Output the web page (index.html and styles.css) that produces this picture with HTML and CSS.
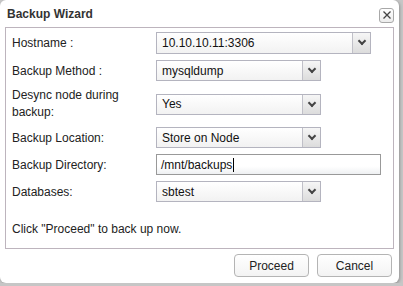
FILE: index.html
```html
<!DOCTYPE html>
<html lang="en">
<head>
    <meta charset="UTF-8">
    <title>Backup Wizard</title>
    <link rel="stylesheet" href="styles.css">
</head>
<body>
    <div class="dialog">
        <div class="title-bar">
            <span class="title">Backup Wizard</span>
            <button class="close" type="button" aria-label="Close">
                <svg width="10" height="10" viewBox="0 0 10 10"><path d="M1.5 1.5 L8.5 8.5 M8.5 1.5 L1.5 8.5" stroke="#444" stroke-width="1.3" fill="none"/></svg>
            </button>
        </div>
        <div class="panel">
            <div class="form-grid">
                <label class="lbl">Hostname :</label>
                <div class="select wide tall"><span>10.10.10.11:3306</span><i class="arrow"></i></div>

                <label class="lbl">Backup Method :</label>
                <div class="select"><span>mysqldump</span><i class="arrow"></i></div>

                <label class="lbl two-line">Desync node during<br>backup:</label>
                <div class="select"><span>Yes</span><i class="arrow"></i></div>

                <label class="lbl">Backup Location:</label>
                <div class="select"><span>Store on Node</span><i class="arrow"></i></div>

                <label class="lbl">Backup Directory:</label>
                <div class="text-input"><span>/mnt/backups</span><i class="caret"></i></div>

                <label class="lbl">Databases:</label>
                <div class="select"><span>sbtest</span><i class="arrow"></i></div>
            </div>
            <p class="hint">Click "Proceed" to back up now.</p>
        </div>
        <div class="buttons">
            <button type="button">Proceed</button>
            <button type="button">Cancel</button>
        </div>
    </div>
</body>
</html>
```

FILE: styles.css
```css
body {
    margin: 0;
    background: #c6c6c6;
    font-family: "Liberation Sans", Arial, sans-serif;
    font-size: 12px;
    color: #222;
}

.dialog {
    width: 399px;
    height: 283px;
    background: #fff;
    border-radius: 6px;
    box-shadow: 1px 1px 3px rgba(0, 0, 0, 0.25);
    box-sizing: border-box;
    padding: 0 5px;
}

.title-bar {
    height: 27px;
    display: flex;
    align-items: center;
    justify-content: space-between;
    padding: 0 0 0 2px;
}

.title {
    font-weight: bold;
    font-size: 12px;
    color: #333;
    margin-top: 1px;
}

.close {
    width: 15px;
    height: 15px;
    padding: 0;
    border: 1px solid #a8a8a8;
    border-radius: 3px;
    background: linear-gradient(#fff, #ececec);
    display: flex;
    align-items: center;
    justify-content: center;
    margin-top: 3px;
}

.panel {
    border: 1px solid #bdb4bd;
    height: 222px;
    box-sizing: border-box;
    padding: 4px 6px 0 6px;
}

.form-grid {
    display: grid;
    grid-template-columns: 144px 1fr;
    row-gap: 6px;
    align-items: center;
}

.lbl {
    color: #222;
}

.two-line {
    line-height: 17px;
}

.select {
    width: 165px;
    height: 21px;
    box-sizing: border-box;
    border: 1px solid #b4b4bf;
    background: linear-gradient(#fff, #f2f2f2);
    display: flex;
    align-items: center;
    color: #111;
}

.select.wide {
    width: 215px;
}

.select.tall {
    height: 22px;
}

.select span {
    flex: 1;
    padding-left: 5px;
}

.arrow {
    width: 17px;
    height: 100%;
    border-left: 1px solid #c0c0c8;
    background: linear-gradient(#f6f6f6, #dcdcdc);
    position: relative;
}

.arrow::after {
    content: "";
    position: absolute;
    left: 6px;
    top: 5px;
    width: 4px;
    height: 4px;
    border-right: 2px solid #444;
    border-bottom: 2px solid #444;
    transform: rotate(45deg);
}

.text-input {
    width: 225px;
    height: 21px;
    box-sizing: border-box;
    border: 1px solid #999;
    background: linear-gradient(#fff 60%, #eef0f2);
    display: flex;
    align-items: center;
    padding-left: 4px;
    color: #111;
}

.caret {
    width: 1px;
    height: 14px;
    background: #000;
    margin-left: 1px;
}

.hint {
    margin: 20px 0 0 0;
    color: #222;
}

.buttons {
    display: flex;
    justify-content: flex-end;
    gap: 8px;
    padding: 5px 2px 0 0;
}

.buttons button {
    width: 75px;
    height: 23px;
    font-family: "Liberation Sans", Arial, sans-serif;
    font-size: 12px;
    color: #222;
    border: 1px solid #b4b4b4;
    border-radius: 4px;
    background: linear-gradient(#fff, #f3f3f3);
}
```
